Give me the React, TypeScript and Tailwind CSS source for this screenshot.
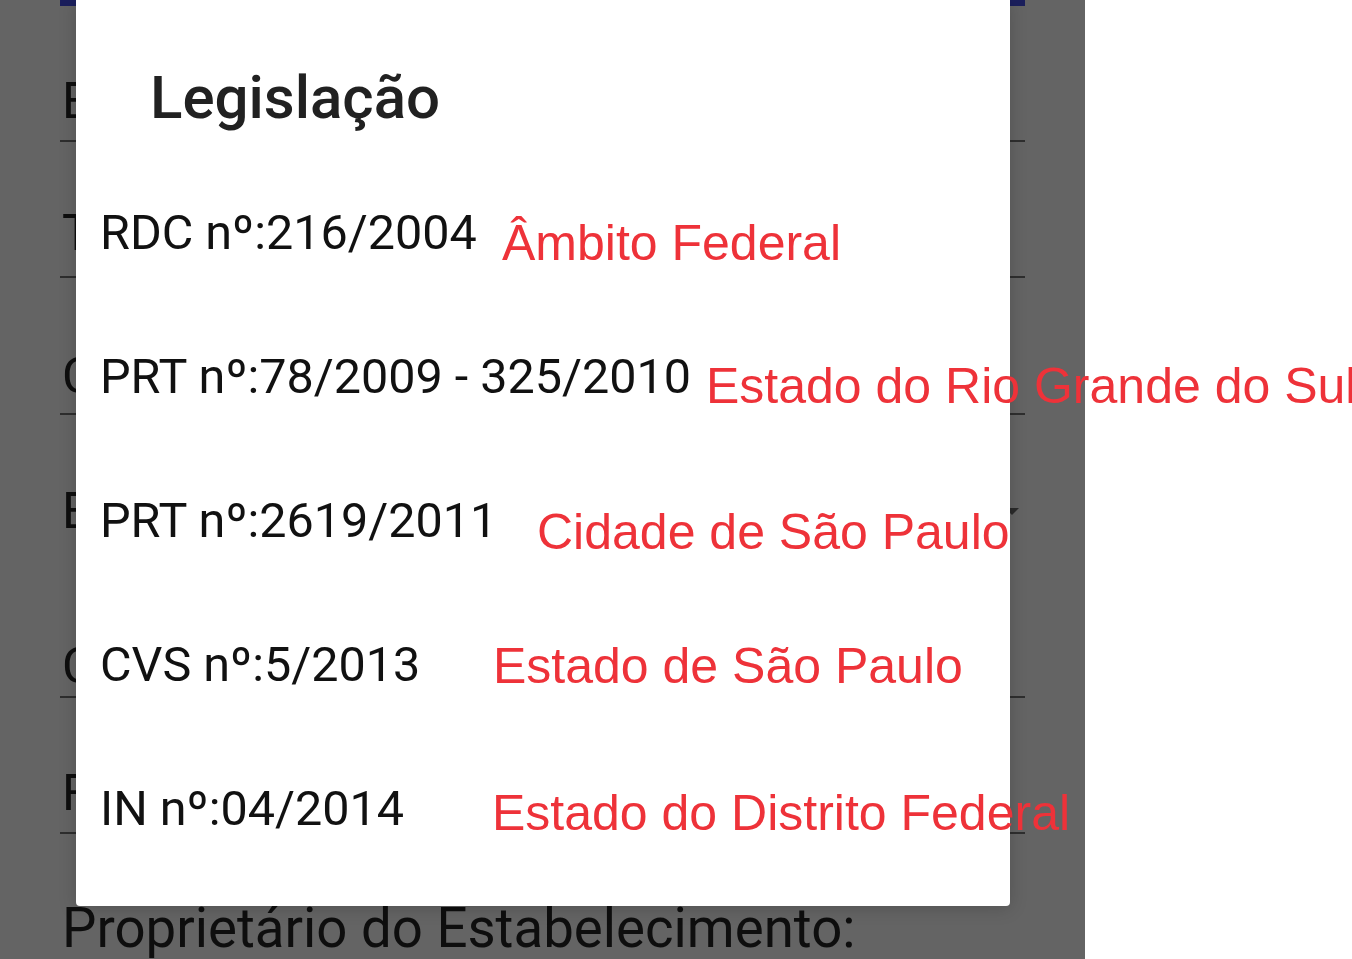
import React from "react";

const formRows = [
  { label: "Estabelecimento:", mt: "mt-[70px]", lineMt: "mt-[14px]", line: true },
  { label: "Tipo:", mt: "mt-[66px]", lineMt: "mt-[18px]", line: true },
  { label: "CNPJ:", mt: "mt-[73px]", lineMt: "mt-[12px]", line: true },
  { label: "Estado:", mt: "mt-[71px]", lineMt: "", line: false, arrow: true },
  { label: "Cidade:", mt: "mt-[105px]", lineMt: "mt-[5px]", line: true },
  { label: "Fone:", mt: "mt-[70px]", lineMt: "mt-[14px]", line: true },
];

const laws = [
  { code: "RDC nº:216/2004", scope: "Âmbito Federal", w: "w-[402px]", mt: "mt-[9px]" },
  { code: "PRT nº:78/2009 - 325/2010", scope: "Estado do Rio Grande do Sul", w: "w-[606px]", mt: "mt-[8px]" },
  { code: "PRT nº:2619/2011", scope: "Cidade de São Paulo", w: "w-[437px]", mt: "mt-[10px]" },
  { code: "CVS nº:5/2013", scope: "Estado de São Paulo", w: "w-[393px]", mt: "mt-0" },
  { code: "IN nº:04/2014", scope: "Estado do Distrito Federal", w: "w-[392px]", mt: "mt-[3px]" },
];

export default function App() {
  return (
    <div className="w-full h-[959px] overflow-hidden bg-white flex">
      <div className="relative w-[1085px] h-[959px] shrink-0 bg-[#646464] font-['Roboto',sans-serif]">
        {/* page behind the dialog, dimmed */}
        <div className="ml-[60px] w-[965px] flex flex-col">
          <div className="h-[6px] bg-[#1b1f5c]" />
          {formRows.map((r) => (
            <div key={r.label} className="flex flex-col">
              <div className={`${r.mt} flex items-center justify-between`}>
                <span className="pl-[2px] text-[50px] leading-none text-[#0e0e0e]">{r.label}</span>
                {r.arrow && (
                  <span className="mr-[6px] w-0 h-0 border-l-[7px] border-r-[7px] border-t-[7px] border-l-transparent border-r-transparent border-t-[#2a2a2a]" />
                )}
              </div>
              {r.line && <div className={`${r.lineMt} h-[2px] bg-[#2e2e2e]`} />}
            </div>
          ))}
          <span className="mt-[67px] pl-[2px] text-[54.6px] leading-none text-[#0e0e0e] whitespace-nowrap">
            Proprietário do Estabelecimento:
          </span>
        </div>

        {/* dialog */}
        <div className="absolute left-[76px] top-0 w-[934px] h-[906px] bg-white rounded-b-[4px] shadow-[0_2px_18px_rgba(0,0,0,0.18)] flex flex-col pt-[68px]">
          <h2 className="pl-[74px] text-[60px] leading-none font-medium text-[#212121]">Legislação</h2>
          <div className="mt-[81px] flex flex-col">
            {laws.map((l) => (
              <div key={l.code} className="h-[144px] flex items-start pl-[24px] whitespace-nowrap">
                <span className={`${l.w} shrink-0 text-[48.5px] leading-none text-[#111111]`}>{l.code}</span>
                <span className={`${l.mt} text-[50px] leading-none text-[#ee3239] font-['Liberation_Sans',Arial,sans-serif]`}>
                  {l.scope}
                </span>
              </div>
            ))}
          </div>
        </div>
      </div>
    </div>
  );
}
